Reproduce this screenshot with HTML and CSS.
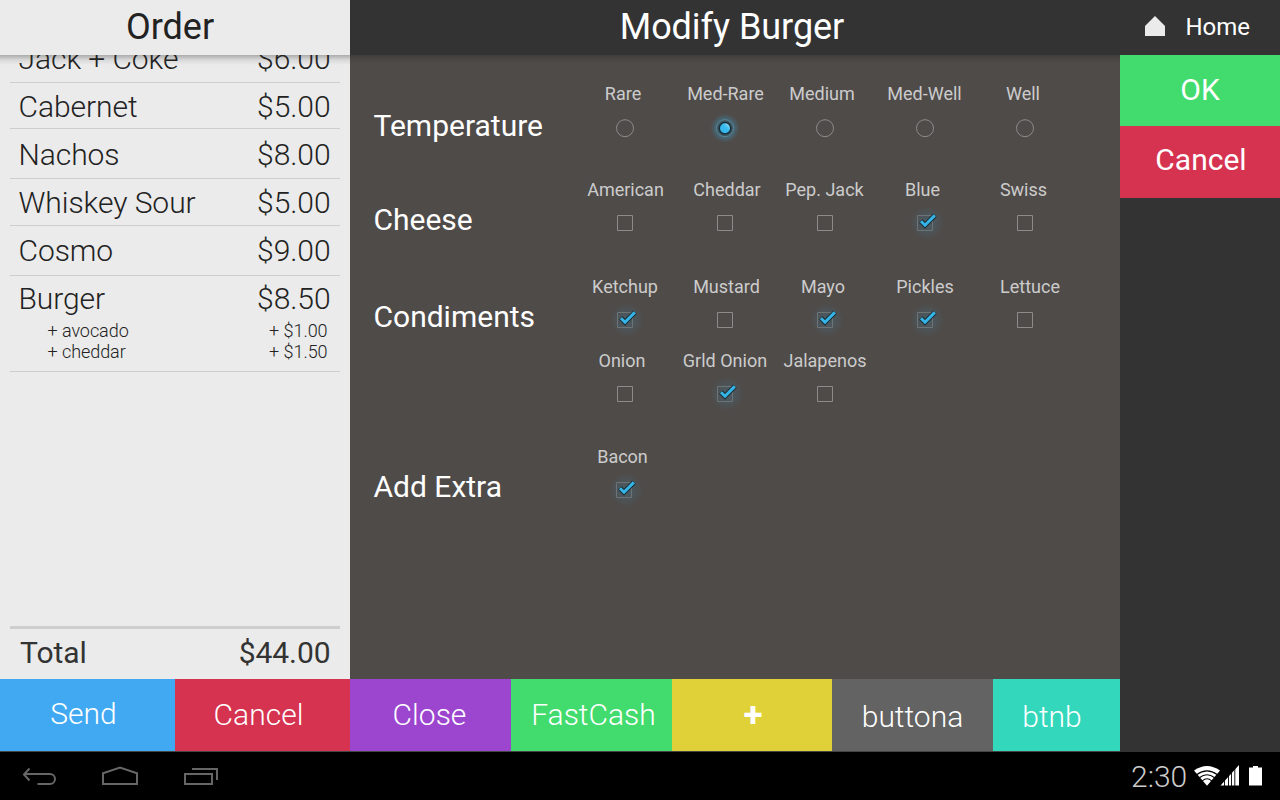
FILE: index.html
```html
<!DOCTYPE html>
<html lang="en">
<head>
<meta charset="utf-8">
<title>Modify Burger</title>
<link rel="stylesheet" href="styles.css">
</head>
<body>
<svg class="defs" width="0" height="0" aria-hidden="true">
  <defs>
    <radialGradient id="glow"><stop offset="0" stop-color="#35a4d8" stop-opacity=".2"/><stop offset=".5" stop-color="#35a4d8" stop-opacity=".11"/><stop offset="1" stop-color="#35a4d8" stop-opacity="0"/></radialGradient>
    <radialGradient id="halo"><stop offset="0" stop-color="#2fa9dc" stop-opacity=".75"/><stop offset=".6" stop-color="#2fa9dc" stop-opacity=".32"/><stop offset="1" stop-color="#2fa9dc" stop-opacity="0"/></radialGradient>
    <linearGradient id="dot" x1="1" y1="0" x2="0" y2="1"><stop offset="0" stop-color="#b5e4f7"/><stop offset=".4" stop-color="#3cbdf0"/><stop offset="1" stop-color="#2fb0e6"/></linearGradient>
    <symbol id="radio" viewBox="0 0 40 40"><circle cx="20" cy="21.200" r="8.500" fill="none" stroke="#8d8a89"/></symbol>
    <symbol id="radio-on" viewBox="0 0 40 40"><circle cx="20" cy="21.200" r="14.500" fill="url(#halo)"/><circle cx="20" cy="21.200" r="8.500" fill="#3d5560" stroke="#5b8593"/><circle cx="20" cy="21.200" r="6.400" fill="#172e39"/><circle cx="20" cy="21.200" r="5" fill="url(#dot)"/></symbol>
    <symbol id="box" viewBox="0 0 40 40"><path d="M12.500 12.500h15v15h-15z" fill="none" stroke="#8d8a89"/></symbol>
    <symbol id="box-on" viewBox="0 0 40 40"><circle cx="22" cy="20" r="17" fill="url(#glow)"/><path d="M12.500 12.500h15v15h-15z" fill="none" stroke="#6d7478"/><path d="M15.800 18l4.200 4.300L30 12.300" fill="none" stroke="#1c2c34" stroke-width="5"/><path d="M16 18.200l4 4L29.800 12.400" fill="none" stroke="#35b5e7" stroke-width="3"/></symbol>
  </defs>
</svg>
<div class="app">
  <header class="bar">
    <h1 class="bar-order">Order</h1>
    <h1 class="bar-title">Modify Burger</h1>
    <a class="home"><svg width="20" height="20" viewBox="0 0 20 20"><path d="M0 20V10L10 0l10 10v10z" fill="#ebebeb"/></svg><span>Home</span></a>
  </header>

  <div class="body">
    <div class="work">
      <div class="columns">
        <section class="order">
          <ul class="lines">
            <li class="line first"><span>Jack + Coke</span><span>$6.00</span></li>
            <li class="line l2"><span>Cabernet</span><span>$5.00</span></li>
            <li class="line l3"><span>Nachos</span><span>$8.00</span></li>
            <li class="line l4"><span>Whiskey Sour</span><span>$5.00</span></li>
            <li class="line l5"><span>Cosmo</span><span>$9.00</span></li>
            <li class="line l6"><span>Burger</span><span>$8.50</span>
              <div class="extra"><span>+ avocado</span><span>+ $1.00</span></div>
              <div class="extra"><span>+ cheddar</span><span>+ $1.50</span></div>
            </li>
          </ul>
          <div class="total"><span>Total</span><span>$44.00</span></div>
        </section>

        <section class="modify">
          <div class="group temp">
            <h2>Temperature</h2>
            <div class="options">
              <label class="opt lf2"><span>Rare</span><svg><use href="#radio"/></svg></label>
              <label class="opt rt0"><span>Med-Rare</span><svg><use href="#radio-on"/></svg></label>
              <label class="opt lf3"><span>Medium</span><svg><use href="#radio"/></svg></label>
              <label class="opt lf1"><span>Med-Well</span><svg><use href="#radio"/></svg></label>
              <label class="opt lf2"><span>Well</span><svg><use href="#radio"/></svg></label>
            </div>
          </div>
          <div class="group cheese">
            <h2>Cheese</h2>
            <div class="options">
              <label class="opt rt0"><span>American</span><svg><use href="#box"/></svg></label>
              <label class="opt rt2"><span>Cheddar</span><svg><use href="#box"/></svg></label>
              <label class="opt lf1"><span>Pep. Jack</span><svg><use href="#box"/></svg></label>
              <label class="opt lf4"><span>Blue</span><svg><use href="#box-on"/></svg></label>
              <label class="opt lf0"><span>Swiss</span><svg><use href="#box"/></svg></label>
            </div>
          </div>
          <div class="group condiments">
            <h2>Condiments</h2>
            <div class="options">
              <label class="opt"><span>Ketchup</span><svg><use href="#box-on"/></svg></label>
              <label class="opt rt1"><span>Mustard</span><svg><use href="#box"/></svg></label>
              <label class="opt lf2"><span>Mayo</span><svg><use href="#box-on"/></svg></label>
              <label class="opt"><span>Pickles</span><svg><use href="#box-on"/></svg></label>
              <label class="opt rt5"><span>Lettuce</span><svg><use href="#box"/></svg></label>
              <label class="opt lf3"><span>Onion</span><svg><use href="#box"/></svg></label>
              <label class="opt"><span>Grld Onion</span><svg><use href="#box-on"/></svg></label>
              <label class="opt"><span>Jalapenos</span><svg><use href="#box"/></svg></label>
            </div>
          </div>
          <div class="group bacon">
            <h2>Add Extra</h2>
            <div class="options">
              <label class="opt lf4"><span>Bacon</span><svg><use href="#box-on"/></svg></label>
            </div>
          </div>
        </section>
      </div>
      <footer class="actions">
        <button class="act send">Send</button>
        <button class="act cancel">Cancel</button>
        <button class="act close">Close</button>
        <button class="act cash">FastCash</button>
        <button class="act plus">+</button>
        <button class="act a">buttona</button>
        <button class="act b">btnb</button>
      </footer>
    </div>
    <aside class="side">
      <button class="side-btn ok">OK</button>
      <button class="side-btn no">Cancel</button>
    </aside>
  </div>

  <nav class="system">
    <svg width="220" height="48" viewBox="0 0 220 48" fill="none" stroke="#666" stroke-width="2">
      <path d="M29.500 16.500l-5.500 6 5.500 6M24.500 22H50a5 5 0 0 1 0 10H37.500"/>
      <path d="M103 32V21.200l17-5.600 17 5.600V32z"/>
      <path d="M185 22h27v10h-27zM192 17h25v11"/>
    </svg>
    <div class="status">
      <span class="clock">2:30</span>
      <svg width="70" height="22" viewBox="0 0 70 22" fill="#fff">
        <path d="M0 5.500Q13-3.500 26 5.500L13 20.800z"/>
        <path d="M2.500 9.700Q13 2 23.500 9.700M5.400 12.800Q13 6.800 20.600 12.800M8.300 15.800Q13 11.800 17.700 15.800" fill="none" stroke="#000" stroke-width="1.100"/>
        <path d="M45 0v20.500H26.500z"/>
        <path d="M30.500 12v9M34.500 8v13M37.500 4v17M40.800 2v19" stroke="#000" stroke-width=".9"/>
        <path d="M55 2.500h4V1h5v1.500h4v18H55z"/>
      </svg>
    </div>
  </nav>
</div>
</body>
</html>
```
FILE: styles.css
```css
* { box-sizing: border-box; }
body { margin: 0; background: #333; font-family: Roboto, "Liberation Sans", sans-serif; }
.defs { position: absolute; }
h1, h2, ul { margin: 0; padding: 0; font-weight: 400; list-style: none; }
button { border: 0; padding: 0; margin: 0; font-family: inherit; color: #fff; }

.app { width: 1280px; height: 800px; display: flex; flex-direction: column; overflow: hidden; }

/* Top bar */
.bar { height: 55px; flex: none; display: grid; grid-template-columns: 350px 770px 160px; background: #333; color: #fff; }
.bar h1 { font-size: 36px; line-height: 42px; padding-top: 6px; text-align: center; }
.bar .bar-order { background: #ebebeb; color: #222; padding-right: 10px; }
.bar .bar-title { padding-right: 6px; letter-spacing: -.05px; }
.home { display: flex; gap: 20.500px; padding: 13px 0 0 25px; font-size: 24px; line-height: 28px; }
.home svg { margin-top: 3px; flex: none; }

.body { height: 697px; flex: none; display: flex; }
.work { width: 1120px; height: 697px; border-bottom: 1px solid #444; }
.columns { display: flex; height: 624px; }

/* Order list */
.order { width: 350px; padding: 0 10px; display: flex; flex-direction: column; overflow: hidden; color: #222; font-size: 30px; line-height: 36px;
  background: linear-gradient(rgba(0,0,0,.27), rgba(0,0,0,.08) 5px, rgba(0,0,0,0) 10px), #ebebeb; }
.lines { flex: 1; font-weight: 300; letter-spacing: -.06px; }
.line { display: flex; flex-wrap: wrap; align-content: flex-start; justify-content: space-between; padding: 6px 9.500px 0 8.500px; border-bottom: 1px solid #cecece; }
.first { height: 28px; padding-top: 0; align-items: flex-start; }
.first span { margin-top: -14px; }
.l2 { height: 46px; }
.l3 { height: 50px; padding-top: 8px; }
.l4 { height: 47px; }
.l5 { height: 50px; padding-top: 7px; }
.l6 { height: 96px; padding-top: 5px; }
.extra { width: 100%; display: flex; justify-content: space-between; padding: 0 3px 0 29px; font-size: 18px; line-height: 21px; color: #222; }
.extra:nth-of-type(1) { margin-top: 3px; }
.total { height: 53px; border-top: 3px solid #cecece; padding: 6px 9.500px 0 10px; display: flex; justify-content: space-between; color: #333; letter-spacing: -.06px; }

/* Modifier options */
.modify { width: 770px; padding: 28px 0 0 23.500px; color: #fff;
  background: linear-gradient(rgba(0,0,0,.2), rgba(0,0,0,.05) 5px, rgba(0,0,0,0) 10px), #4f4b49; }
.group { display: flex; height: 96px; }
.group h2 { width: 201.500px; flex: none; font-size: 30px; line-height: 36px; padding-top: 23px; white-space: nowrap; }
.group.temp h2 { padding-top: 25px; }
.cheese { height: 97px; }
.condiments { height: 170px; }
.bacon svg { margin-left: -1px; margin-right: 1px; }
.options { display: grid; grid-template-columns: repeat(5, 100px); grid-auto-rows: 54px; row-gap: 20px; align-content: start; }
.opt { display: flex; flex-direction: column; align-items: center; font-size: 18px; line-height: 21px; color: #ccc; white-space: nowrap; }
.opt svg { width: 40px; height: 40px; margin-top: 3px; flex: none; }
.lf0 span { margin-right: 3px; }
.lf1 span { margin-right: 1px; }
.lf2 span { margin-right: 4px; }
.lf3 span { margin-right: 6px; }
.lf4 span { margin-right: 5px; }
.rt0 span { margin-left: 1px; }
.rt1 span { margin-left: 3px; }
.rt2 span { margin-left: 4px; }
.rt5 span { margin-left: 10px; }

/* Bottom actions */
.actions { display: flex; height: 72px; }
.act { height: 72px; font-size: 30px; font-weight: 300; line-height: 36px; white-space: nowrap; }
.send { width: 175px; background: #41a9f2; padding: 0 8px 2px 0; }
.cancel { width: 175px; background: #d63350; padding-right: 8px; }
.close { width: 161px; background: #9c46d0; padding-right: 2px; }
.cash { width: 161px; background: #42dc6e; padding-left: 4px; }
.plus { width: 160px; background: #e1d138; font-weight: 700; font-size: 35px; padding: 2px 0 0 2px; }
.a { width: 161px; background: #636363; padding-top: 4px; }
.b { width: 127px; background: #33d7bb; padding: 4px 9px 0 0; }

/* Side actions */
.side { width: 160px; display: flex; flex-direction: column; }
.side-btn { font-size: 30px; line-height: 36px; }
.ok { height: 71px; background: #42dc6e; padding-bottom: 2px; }
.no { height: 72px; background: #d63350; padding: 0 0 4px 2px; }

/* System bar */
.system { height: 48px; flex: none; background: #000; display: flex; justify-content: space-between; }
.status { display: flex; width: 149px; justify-content: space-between; padding-top: 7px; }
.clock { color: #ccc; font-size: 30px; font-weight: 300; line-height: 36px; }
.status svg { margin: 6px 16px 0 0; }
```
